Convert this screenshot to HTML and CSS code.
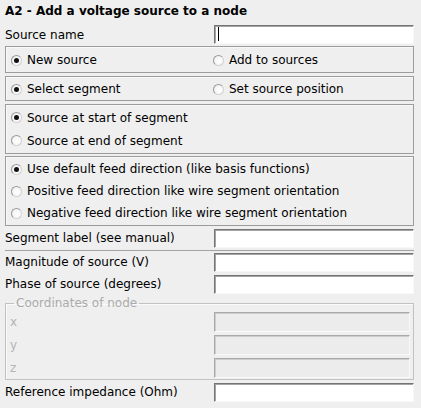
FILE: index.html
```html
<!DOCTYPE html>
<html>
<head>
<meta charset="utf-8">
<link rel="stylesheet" href="styles.css">
</head>
<body>
<div class="title">A2 - Add a voltage source to a node</div>

<div class="row row-first">
  <span class="label">Source name</span>
  <span class="entry"><span class="caret"></span></span>
</div>

<div class="box box-cols box-a">
  <div class="opt col1"><span class="radio on"></span>New source</div>
  <div class="opt"><span class="radio"></span>Add to sources</div>
</div>

<div class="box box-cols box-b">
  <div class="opt col1"><span class="radio on"></span>Select segment</div>
  <div class="opt"><span class="radio"></span>Set source position</div>
</div>

<div class="box box-c">
  <div class="opt opt23"><span class="radio on"></span>Source at start of segment</div>
  <div class="opt opt23"><span class="radio"></span>Source at end of segment</div>
</div>

<div class="box box-d">
  <div class="opt opt22"><span class="radio on"></span>Use default feed direction (like basis functions)</div>
  <div class="opt opt22"><span class="radio"></span>Positive feed direction like wire segment orientation</div>
  <div class="opt opt22"><span class="radio"></span>Negative feed direction like wire segment orientation</div>
</div>

<div class="row row-seg">
  <span class="label">Segment label (see manual)</span>
  <span class="entry"></span>
</div>

<div class="sep"></div>

<div class="row">
  <span class="label">Magnitude of source (V)</span>
  <span class="entry"></span>
</div>
<div class="row">
  <span class="label">Phase of source (degrees)</span>
  <span class="entry"></span>
</div>

<fieldset class="coords">
  <legend>Coordinates of node</legend>
  <div class="crow"><span class="clabel">x</span><span class="entry disabled"></span></div>
  <div class="crow"><span class="clabel">y</span><span class="entry disabled"></span></div>
  <div class="crow"><span class="clabel">z</span><span class="entry disabled"></span></div>
</fieldset>

<div class="row row-ref">
  <span class="label">Reference impedance (Ohm)</span>
  <span class="entry"></span>
</div>
</body>
</html>
```

FILE: styles.css
```css
html, body {
  margin: 0;
  padding: 0;
}
body {
  background: #efefef;
  font-family: "DejaVu Sans", sans-serif;
  font-size: 12px;
  color: #000;
  padding: 0 7px 0 5px;
  width: 409px;
}
.title {
  height: 22px;
  line-height: 22px;
  font-weight: bold;
}
.row {
  display: flex;
  align-items: center;
  justify-content: space-between;
  height: 22px;
}
.row-first, .row-seg {
  height: 24px;
}
.row-first .label {
  padding-top: 1px;
}
.row-ref {
  margin-top: 1px;
}
.label {
  white-space: nowrap;
}
.entry {
  box-sizing: border-box;
  display: flex;
  align-items: center;
  width: 200px;
  height: 19px;
  background: #fff;
  border: 1px solid;
  border-color: #747474 #f8f8f8 #f8f8f8 #747474;
  box-shadow: inset 1px 1px 0 #a4a4a4;
  padding-left: 3px;
}
.entry.disabled {
  width: 196px;
  height: 20px;
  background: #ececec;
  border-color: #a9a9a9 #f9f9f9 #f9f9f9 #a9a9a9;
  box-shadow: inset 1px 1px 0 #cdcdcd;
}
.caret {
  display: block;
  width: 1px;
  height: 14px;
  background: #000;
}
.box {
  box-sizing: border-box;
  border: 1px solid #9c9c9c;
  box-shadow: inset 1px 1px 0 #f9f9f9;
  padding: 0 4px;
}
.box-cols {
  display: flex;
  align-items: center;
}
.box-a {
  height: 27px;
  padding-top: 1px;
}
.box-b {
  height: 25px;
  margin-top: 3px;
  padding-top: 1px;
}
.box-c {
  margin-top: 3px;
  padding-top: 1px;
  padding-bottom: 1px;
}
.box-d {
  margin-top: 2px;
  padding-top: 1px;
  padding-bottom: 1px;
}
.opt {
  display: flex;
  align-items: center;
  white-space: nowrap;
}
.col1 {
  width: 202px;
}
.opt23 {
  height: 23px;
}
.opt22 {
  height: 22px;
}
.radio {
  box-sizing: border-box;
  width: 11px;
  height: 11px;
  border-radius: 50%;
  border: 1px solid;
  border-color: #9a9a9a #d2d2d2 #d2d2d2 #9a9a9a;
  background: radial-gradient(circle at 60% 60%, #ffffff 0, #f6f6f6 55%, #e2e2e2 100%);
  margin-right: 5px;
  margin-left: 1px;
  display: flex;
  align-items: center;
  justify-content: center;
  flex: none;
}
.radio.on::after {
  content: "";
  width: 5px;
  height: 5px;
  border-radius: 50%;
  background: #111;
}
.sep {
  height: 1px;
  background: #a2a2a2;
}
.coords {
  margin: 1px 0 0 0;
  padding: 0 3px 0 4px;
  border: 1px solid #c2c2c2;
  box-shadow: inset 1px 1px 0 #fafafa;
}
.coords legend {
  color: #ababab;
  padding: 0 2px;
  margin-left: 4px;
  line-height: 14px;
}
.crow {
  display: flex;
  align-items: center;
  justify-content: space-between;
  height: 23px;
}
.clabel {
  color: #b4b4b4;
}
```
